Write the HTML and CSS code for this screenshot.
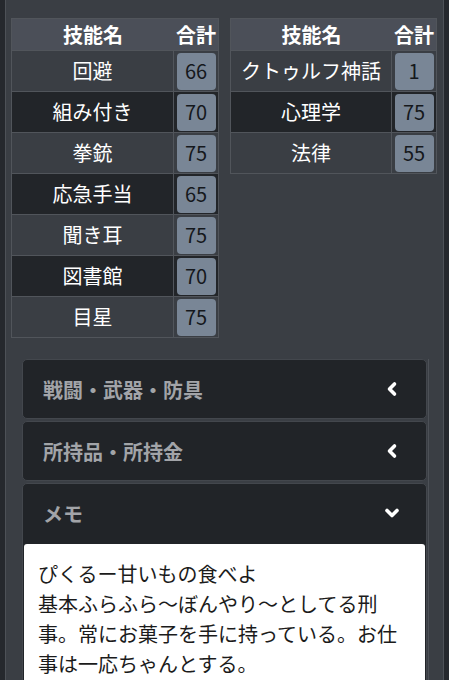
FILE: index.html
```html
<!DOCTYPE html>
<html lang="ja">
<head>
<meta charset="UTF-8">
<title>キャラクターシート</title>
<link rel="stylesheet" href="styles.css">
</head>
<body>
<div class="panel">
    <div class="skills">
        <div class="skill-table">
            <div class="row head"><div class="name">技能名</div><div class="total">合計</div></div>
            <div class="row"><div class="name">回避</div><div class="total"><span class="num">66</span></div></div>
            <div class="row dark"><div class="name">組み付き</div><div class="total"><span class="num">70</span></div></div>
            <div class="row"><div class="name">拳銃</div><div class="total"><span class="num">75</span></div></div>
            <div class="row dark"><div class="name">応急手当</div><div class="total"><span class="num">65</span></div></div>
            <div class="row"><div class="name">聞き耳</div><div class="total"><span class="num">75</span></div></div>
            <div class="row dark"><div class="name">図書館</div><div class="total"><span class="num">70</span></div></div>
            <div class="row"><div class="name">目星</div><div class="total"><span class="num">75</span></div></div>
        </div>
        <div class="skill-table">
            <div class="row head"><div class="name">技能名</div><div class="total">合計</div></div>
            <div class="row"><div class="name">クトゥルフ神話</div><div class="total"><span class="num">1</span></div></div>
            <div class="row dark"><div class="name">心理学</div><div class="total"><span class="num">75</span></div></div>
            <div class="row"><div class="name">法律</div><div class="total"><span class="num">55</span></div></div>
        </div>
    </div>

    <div class="accordion">
        <div class="card">
            <div class="card-head">
                <span>戦闘・武器・防具</span>
                <svg class="chev" width="16" height="16" viewBox="0 0 16 16"><polyline points="10.5,3 5.5,8 10.5,13" fill="none" stroke="#fff" stroke-width="3.6" stroke-linecap="round" stroke-linejoin="round"/></svg>
            </div>
        </div>
        <div class="card">
            <div class="card-head">
                <span>所持品・所持金</span>
                <svg class="chev" width="16" height="16" viewBox="0 0 16 16"><polyline points="10.5,3 5.5,8 10.5,13" fill="none" stroke="#fff" stroke-width="3.6" stroke-linecap="round" stroke-linejoin="round"/></svg>
            </div>
        </div>
        <div class="card open">
            <div class="card-head">
                <span>メモ</span>
                <svg class="chev" width="16" height="16" viewBox="0 0 16 16"><polyline points="3,5.5 8,10.5 13,5.5" fill="none" stroke="#fff" stroke-width="3.6" stroke-linecap="round" stroke-linejoin="round"/></svg>
            </div>
            <div class="card-body">ぴくるー甘いもの食べよ<br>基本ふらふら〜ぼんやり〜としてる刑事。常にお菓子を手に持っている。お仕事は一応ちゃんとする。</div>
        </div>
    </div>
</div>
</body>
</html>
```

FILE: styles.css
```css
html,body{margin:0;padding:0;}
body{
    background:#25282d;
    font-family:"Noto Sans CJK JP","Noto Sans",sans-serif;
    height:680px;
    overflow:hidden;
}
.panel{
    margin-left:5px;
    width:437px;
    min-height:680px;
    background:#3a3e44;
    border-left:1px solid #4d5157;
    border-right:1px solid #4d5157;
}
.skills{
    display:flex;
    align-items:flex-start;
    gap:11px;
    padding:18px 0 0 5px;
}
.skill-table{
    width:206px;
    border:1px solid #51555b;
    background:#3a3e44;
}
.skill-table + .skill-table{width:205px;}
.row{
    display:flex;
    height:40px;
    border-top:1px solid #51555b;
    color:#fff;
    font-size:20px;
}
.row.dark{background:#222529;}
.row.head{
    height:31px;
    border-top:none;
    background:#4b4f58;
    font-weight:bold;
}
.name{
    flex:1;
    display:flex;
    align-items:center;
    justify-content:center;
    line-height:1;
}
.total{
    width:44px;
    display:flex;
    align-items:center;
    justify-content:center;
    line-height:1;
    border-left:1px solid #51555b;
}
.row.head .total{border-left:none;}
.num{
    display:flex;
    align-items:center;
    justify-content:center;
    width:39px;
    height:37px;
    border-radius:4px;
    background:#798696;
    color:#15181c;
    font-size:20px;
}
.accordion{
    margin:21px 0 0 16px;
    width:405px;
    display:flex;
    flex-direction:column;
    gap:2px;
    border-right:1px solid #4d5157;
    padding-right:1px;
}
.card{
    background:#212428;
    border:1px solid #43474d;
    border-radius:5px;
}
.card-head{
    height:58px;
    display:flex;
    align-items:center;
    justify-content:space-between;
    padding:0 26px 0 20px;
    color:#a2a4a8;
    font-size:20px;
    font-weight:bold;
}
.chev{display:block;}
.card-body{
    margin:2px 1px 0;
    background:#fff;
    border-radius:3px 3px 0 0;
    padding:15px 14px 20px;
    color:#1b1b1b;
    font-size:20px;
    line-height:30px;
}
```
